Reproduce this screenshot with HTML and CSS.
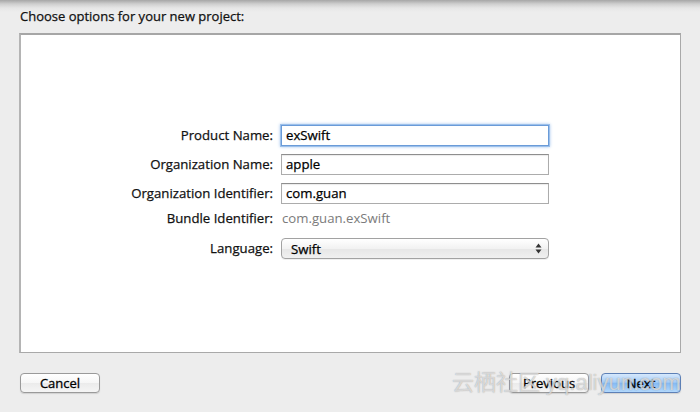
FILE: index.html
```html
<!DOCTYPE html>
<html>
<head>
<meta charset="utf-8">
<link rel="stylesheet" href="styles.css">
</head>
<body>
<div class="window">
  <div class="title">Choose options for your new project:</div>
  <div class="panel">
    <div class="form">
      <div class="label">Product Name:</div>
      <div class="field focused">exSwift</div>
      <div class="label">Organization Name:</div>
      <div class="field">apple</div>
      <div class="label">Organization Identifier:</div>
      <div class="field">com.guan</div>
      <div class="label bundle">Bundle Identifier:</div>
      <div class="static">com.guan.exSwift</div>
      <div class="label lang">Language:</div>
      <div class="select lang">
        <span>Swift</span>
        <svg class="arrows" width="7" height="11" viewBox="0 0 7 11"><path d="M3.5 0.5 L6.5 4.5 L0.5 4.5 Z M3.5 10.5 L6.5 6.5 L0.5 6.5 Z" fill="#333"/></svg>
      </div>
    </div>
  </div>
  <div class="footer">
    <div class="btn">Cancel</div>
    <div class="spacer"></div>
    <div class="btn">Previous</div>
    <div class="btn primary">Next</div>
  </div>
  <div class="watermark">云栖社区 yq.aliyun.com</div>
</div>
</body>
</html>
```
FILE: styles.css
```css
html, body {
  margin: 0;
  padding: 0;
}
body {
  width: 700px;
  height: 412px;
  overflow: hidden;
  font-family: "Open Sans", "Liberation Sans", sans-serif;
  color: #000;
}
.window {
  position: relative;
  width: 700px;
  height: 412px;
  background: linear-gradient(#a6a6a6 0px, #cfcfcf 4px, #e6e6e6 8px, #ededed 12px);
  display: flex;
  flex-direction: column;
}
.title {
  height: 33px;
  box-sizing: border-box;
  padding-left: 20px;
  padding-top: 7px;
  font-size: 13px;
  line-height: 18px;
  color: #111;
  -webkit-text-stroke: 0.25px #111;
}
.panel {
  margin: 0 19px;
  height: 320px;
  box-sizing: border-box;
  background: #fff;
  border: 1px solid #a9a9a9;
  border-top: 2px solid #a6a6a6;
  border-left: 2px solid #b4b4b4;
  padding-top: 90px;
  padding-left: 1px;
}
.form {
  display: grid;
  grid-template-columns: 251px 268px;
  grid-template-rows: 21px 21px 21px 16px 21px;
  column-gap: 8px;
  row-gap: 8px;
  font-size: 13.2px;
}
.bundle, .static {
  margin-top: -2px;
}
.lang {
  margin-top: 2px;
}
.label {
  text-align: right;
  line-height: 21px;
  white-space: nowrap;
  color: #111;
  -webkit-text-stroke: 0.25px #111;
}
.label.bundle { line-height: 16px; }
.field {
  box-sizing: border-box;
  height: 21px;
  border: 1px solid #acacac;
  border-top-color: #8e8e8e;
  box-shadow: inset 0 1px 1px rgba(0,0,0,0.08);
  padding-left: 4px;
  line-height: 19px;
  font-size: 13.2px;
  -webkit-text-stroke: 0.25px #000;
}
.field.focused {
  border: 1px solid #6a9bd8;
  box-shadow: 0 0 0 1px #9cc0eb, 0 0 3px 1px #a9c9ef;
}
.static {
  color: #7b7b7b;
  line-height: 16px;
  font-size: 13.2px;
  padding-left: 1px;
}
.select {
  box-sizing: border-box;
  height: 21px;
  border: 1px solid #a2a2a2;
  border-radius: 4px;
  background: linear-gradient(#ffffff, #f2f2f2 50%, #e6e6e6 51%, #f0f0f0);
  box-shadow: 0 1px 0 rgba(0,0,0,0.06);
  display: flex;
  align-items: center;
  justify-content: space-between;
  padding: 0 6px 0 9px;
  font-size: 13.2px;
  -webkit-text-stroke: 0.25px #000;
}
.arrows {
  display: block;
}
.footer {
  display: flex;
  align-items: center;
  padding: 20px 19px 0 20px;
  gap: 12px;
}
.spacer {
  flex: 1;
}
.btn {
  box-sizing: border-box;
  width: 80px;
  height: 20px;
  border: 1px solid #9a9a9a;
  border-radius: 4px;
  background: linear-gradient(#ffffff, #f6f6f6 50%, #ebebeb 51%, #f5f5f5);
  box-shadow: 0 1px 1px rgba(0,0,0,0.12);
  text-align: center;
  line-height: 18px;
  font-size: 13px;
  -webkit-text-stroke: 0.3px #000;
}
.btn.primary {
  border-color: #5d80b6;
  background: linear-gradient(#d6e8fc, #a6cdf6 45%, #86bbf3 52%, #b2d8fc);
}
.watermark {
  position: absolute;
  left: 452px;
  top: 369px;
  font-family: "Liberation Sans", "Noto Sans CJK SC", sans-serif;
  font-size: 22px;
  line-height: 28px;
  color: rgba(255,255,255,0.6);
  text-shadow: 0 0 1px rgba(110,110,110,0.7);
  white-space: nowrap;
  pointer-events: none;
}
```
